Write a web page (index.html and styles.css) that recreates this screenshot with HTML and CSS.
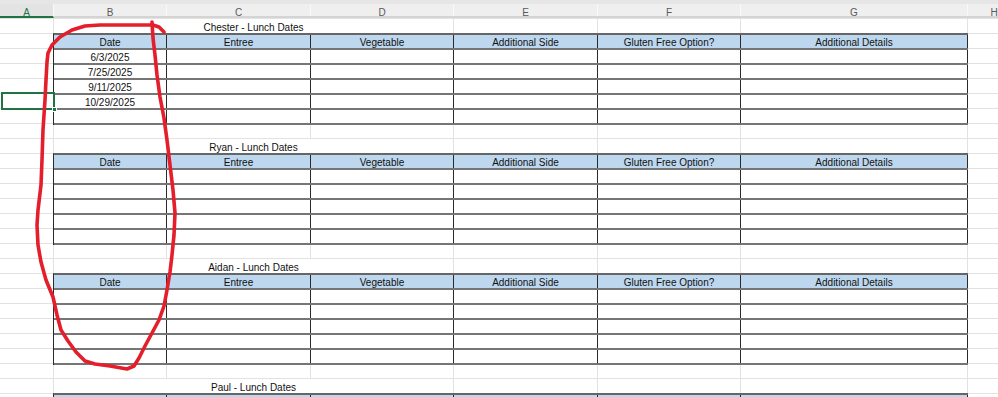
FILE: index.html
```html
<!DOCTYPE html>
<html lang="en">
<head>
<meta charset="utf-8">
<title>Lunch Dates</title>
<link rel="stylesheet" href="styles.css">
</head>
<body>
<div class="sheet">
  <div class="col-heads">
    <div class="ch sel">A</div><div class="ch">B</div><div class="ch">C</div><div class="ch">D</div><div class="ch">E</div><div class="ch">F</div><div class="ch">G</div><div class="ch">H</div>
  </div>
  <div class="rows">
    <div class="title-row"><span class="title">Chester - Lunch Dates</span></div>
    <div class="tbl">
      <div class="tr head"><div>Date</div><div>Entree</div><div>Vegetable</div><div>Additional Side</div><div>Gluten Free Option?</div><div>Additional Details</div></div>
      <div class="tr"><div>6/3/2025</div><div></div><div></div><div></div><div></div><div></div></div>
      <div class="tr"><div>7/25/2025</div><div></div><div></div><div></div><div></div><div></div></div>
      <div class="tr"><div>9/11/2025</div><div></div><div></div><div></div><div></div><div></div></div>
      <div class="tr"><div>10/29/2025</div><div></div><div></div><div></div><div></div><div></div></div>
      <div class="tr"><div></div><div></div><div></div><div></div><div></div><div></div></div>
    </div>
    <div class="spacer"></div>

    <div class="title-row"><span class="title">Ryan - Lunch Dates</span></div>
    <div class="tbl">
      <div class="tr head"><div>Date</div><div>Entree</div><div>Vegetable</div><div>Additional Side</div><div>Gluten Free Option?</div><div>Additional Details</div></div>
      <div class="tr"><div></div><div></div><div></div><div></div><div></div><div></div></div>
      <div class="tr"><div></div><div></div><div></div><div></div><div></div><div></div></div>
      <div class="tr"><div></div><div></div><div></div><div></div><div></div><div></div></div>
      <div class="tr"><div></div><div></div><div></div><div></div><div></div><div></div></div>
      <div class="tr"><div></div><div></div><div></div><div></div><div></div><div></div></div>
    </div>
    <div class="spacer"></div>

    <div class="title-row"><span class="title">Aidan - Lunch Dates</span></div>
    <div class="tbl">
      <div class="tr head"><div>Date</div><div>Entree</div><div>Vegetable</div><div>Additional Side</div><div>Gluten Free Option?</div><div>Additional Details</div></div>
      <div class="tr"><div></div><div></div><div></div><div></div><div></div><div></div></div>
      <div class="tr"><div></div><div></div><div></div><div></div><div></div><div></div></div>
      <div class="tr"><div></div><div></div><div></div><div></div><div></div><div></div></div>
      <div class="tr"><div></div><div></div><div></div><div></div><div></div><div></div></div>
      <div class="tr"><div></div><div></div><div></div><div></div><div></div><div></div></div>
    </div>
    <div class="spacer"></div>

    <div class="title-row"><span class="title">Paul - Lunch Dates</span></div>
    <div class="tbl">
      <div class="tr head"><div></div><div></div><div></div><div></div><div></div><div></div></div>
    </div>
  </div>

  <div class="selection"><span class="handle"></span></div>

  <svg class="ink" width="998" height="397" viewBox="0 0 998 397" aria-hidden="true">
    <path d="M164 32 L159 27 L153 25 L130 25 L100 25 L85 26 L72 30 L60 37 L52 45 L48 53 L47 62 L46 80 L45 100 L43 130 L42 160 L41 185 L38 210 L37 225 L38 245 L41 262 L46 280 L53 297 L57 315 L61 330 L68 341 L76 352 L85 361 L95 364 L110 366 L127 369 L134 366 L139 358 L145 346 L152 333 L159 320 L164 306 L167 290 L170 272 L172 255 L174 235 L175 213 L173 190 L170 165 L167 140 L164 118 L160 97 L157 75 L155 55 L153 38 L152 22"/>
  </svg>
</div>
</body>
</html>
```

FILE: styles.css
```css
* { box-sizing: border-box; }

html, body {
  margin: 0;
  padding: 0;
  background: #ffffff;
}

body {
  font-family: "Liberation Sans", Arial, sans-serif;
  font-size: 10px;
  color: #111;
  overflow: hidden;
}

.sheet {
  position: relative;
  width: 998px;
  height: 397px;
  overflow: hidden;
}

/* column letter header */
.col-heads {
  display: grid;
  grid-template-columns: 54px 113px 144px 143px 144px 143px 227px 53px;
  grid-template-rows: 12px;
  height: 18px;
  padding-top: 4px;
  background: #e6e6e6;
  border-bottom: 2px solid #d4d4d4;
}

.ch {
  background: #efefef;
  border-right: 1px solid #f9f9f9;
  text-align: center;
  line-height: 17px;
  color: #5a5a5a;
}

.ch.sel {
  background: #e3e3e3;
  color: #217346;
  margin-bottom: -2px;
  border-bottom: 2px solid #217346;
}

/* sheet body with gridlines */
.rows {
  background-color: #ffffff;
  background-image:
    linear-gradient(#e2e2e2, #e2e2e2),
    linear-gradient(#e2e2e2, #e2e2e2),
    linear-gradient(#e2e2e2, #e2e2e2),
    linear-gradient(#e2e2e2, #e2e2e2),
    linear-gradient(#e2e2e2, #e2e2e2),
    linear-gradient(#e2e2e2, #e2e2e2),
    linear-gradient(#e2e2e2, #e2e2e2),
    repeating-linear-gradient(to bottom, #e2e2e2 0, #e2e2e2 1px, transparent 1px, transparent 15px);
  background-size: 1px 100%, 1px 100%, 1px 100%, 1px 100%, 1px 100%, 1px 100%, 1px 100%, 100% 100%;
  background-position: 53px 0, 166px 0, 310px 0, 453px 0, 597px 0, 740px 0, 967px 0, 0 0;
  background-repeat: no-repeat;
  height: 379px;
}

.title-row {
  display: flex;
  height: 15px;
  padding: 1px 0 0 54px;
}

.title {
  width: 399px;
  height: 14px;
  padding-top: 3px;
  background: #ffffff;
  text-align: center;
  line-height: 11px;
  color: #111;
}

.spacer {
  height: 13px;
}

/* bordered tables */
.tbl {
  margin-left: 53px;
  width: 915px;
  border-left: 1px solid #2a2a2a;
  border-top: 2px solid #666666;
}

.tr {
  display: grid;
  grid-template-columns: 113px 144px 143px 144px 143px 227px;
  grid-template-rows: 13px;
  height: 15px;
  border-bottom: 2px solid #767676;
}

.tr > div {
  background: #ffffff;
  border-right: 1px solid #2a2a2a;
  text-align: center;
  line-height: 15px;
  white-space: nowrap;
}

.tr.head > div {
  background: #bdd7ee;
}

/* active cell outline */
.selection {
  position: absolute;
  left: 1px;
  top: 92px;
  width: 54px;
  height: 18px;
  border: 2px solid #217346;
}

.handle {
  position: absolute;
  right: -4px;
  bottom: -4px;
  width: 5px;
  height: 5px;
  background: #217346;
  border: 1px solid #ffffff;
}

/* red freehand annotation */
.ink {
  position: absolute;
  left: 0;
  top: 0;
  pointer-events: none;
}

.ink path {
  fill: none;
  stroke: #e41e2b;
  stroke-width: 3.6;
  stroke-linecap: round;
  stroke-linejoin: round;
}
```
